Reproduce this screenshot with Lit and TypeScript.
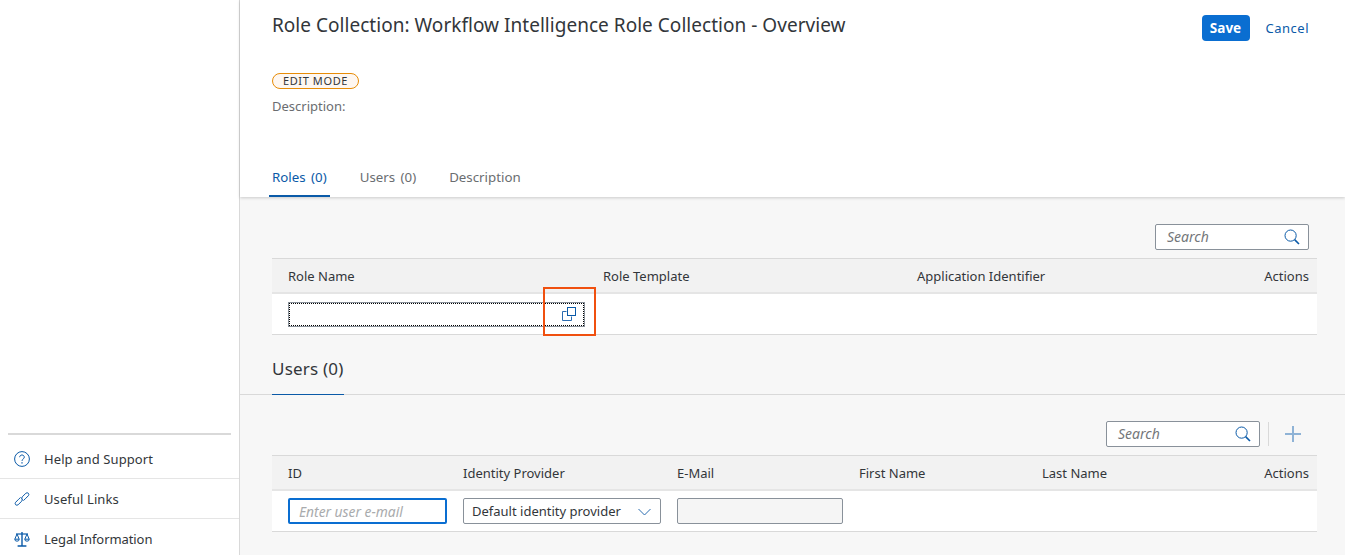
import { LitElement, css, html } from 'lit'
import { customElement } from 'lit/decorators.js'

const searchIcon = html`<svg class="search-icon" viewBox="0 0 16 16" width="16" height="16" fill="none" stroke="#0a5aa8">
  <circle cx="6.6" cy="6.6" r="5.6" stroke-width="1"></circle>
  <path d="M10.6 10.6 15 15" stroke-width="1.6"></path>
</svg>`

@customElement('app-root')
export class AppRoot extends LitElement {
  render() {
    return html`
      <aside class="sidebar">
        <div class="side-links">
          <div class="side-item">
            <svg viewBox="0 0 16 16" width="16" height="16" fill="none" stroke="#0a5aa8">
              <circle cx="8" cy="8" r="7.4"></circle>
              <path d="M5.7 6.2C5.7 4.8 6.7 4 8 4s2.3.9 2.3 2.1c0 1.9-2.3 1.9-2.3 3.8"></path>
              <path d="M8 11.2v1.4" stroke-width="1.3"></path>
            </svg>
            <span>Help and Support</span>
          </div>
          <div class="side-item">
            <svg viewBox="0 0 16 16" width="16" height="16" fill="none" stroke="#0a5aa8">
              <path d="M6.6 6.4 4.7 8.2 1.6 11.3a2 2 0 0 0 0 2.4 2 2 0 0 0 2.6 0l3.6-3.6a2 2 0 0 0 0-2.6"></path>
              <path d="M9.4 9.6l1.9-1.8 3.1-3.1a2 2 0 0 0 0-2.4 2 2 0 0 0-2.6 0L8.2 5.9a2 2 0 0 0 0 2.6"></path>
            </svg>
            <span>Useful Links</span>
          </div>
          <div class="side-item">
            <svg viewBox="0 0 16 16" width="16" height="16" fill="none" stroke="#0a5aa8">
              <path d="M8 1v13.4M3.6 15h8.8" stroke-width="1.4"></path>
              <path d="M2 3h12" stroke-width="1.2"></path>
              <path d="M3 3 .8 8.2h4.4zM13 3l-2.2 5.2h4.4z"></path>
              <path d="M.8 8.2a2.2 2 0 0 0 4.4 0M10.8 8.2a2.2 2 0 0 0 4.4 0"></path>
            </svg>
            <span>Legal Information</span>
          </div>
        </div>
      </aside>
      <main class="main">
        <header class="header">
          <div class="title-row">
            <h1>Role Collection: Workflow Intelligence Role Collection - Overview</h1>
            <div class="actions">
              <button class="save">Save</button>
              <span class="cancel">Cancel</span>
            </div>
          </div>
          <div class="badge">EDIT MODE</div>
          <div class="desc">Description:</div>
          <nav class="tabs">
            <span class="tab active">Roles (0)</span>
            <span class="tab">Users (0)</span>
            <span class="tab">Description</span>
          </nav>
        </header>

        <section class="roles">
          <div class="toolbar">
            <div class="search"><span>Search</span>${searchIcon}</div>
          </div>
          <div class="table">
            <div class="thead roles-grid">
              <span>Role Name</span><span>Role Template</span><span>Application Identifier</span><span class="right">Actions</span>
            </div>
            <div class="trow roles-grid">
              <div class="role-input">
                <svg viewBox="0 0 14 14" width="14" height="14" fill="none" stroke="#0a5aa8">
                  <path d="M4.5 4.5H.5v9h9v-4" stroke="#2b6cb0"></path>
                  <rect x="5.5" y=".5" width="8" height="8"></rect>
                </svg>
              </div>
            </div>
          </div>
        </section>

        <div class="users-head"><h2>Users (0)</h2></div>

        <section class="users">
          <div class="toolbar">
            <div class="search"><span>Search</span>${searchIcon}</div>
            <span class="sep"></span>
            <svg class="plus" viewBox="0 0 16 16" width="16" height="16" stroke="#8fb3d6" stroke-width="2">
              <path d="M8 0v16M0 8h16"></path>
            </svg>
          </div>
          <div class="table">
            <div class="thead users-grid">
              <span>ID</span><span>Identity Provider</span><span>E-Mail</span><span>First Name</span><span>Last Name</span><span class="right">Actions</span>
            </div>
            <div class="trow users-grid">
              <div class="field id-field">Enter user e-mail</div>
              <div class="field select">
                <span>Default identity provider</span>
                <svg viewBox="0 0 13 8" width="13" height="8" fill="none" stroke="#2b6cb0"><path d="M.5 1 6.5 7l6-6"></path></svg>
              </div>
              <div class="field mail"></div>
            </div>
          </div>
        </section>

        <div class="callout"></div>
      </main>
    `
  }

  static styles = css`
    :host {
      display: flex;
      height: 555px;
      overflow: hidden;
      background: #f7f7f7;
      color: #32363a;
      font-family: 'Noto Sans', Arial, sans-serif;
      font-size: 13px;
    }

    .sidebar {
      width: 239px;
      flex: none;
      background: #fff;
      border-right: 1px solid #d9d9d9;
      display: flex;
      flex-direction: column;
      justify-content: flex-end;
    }

    .side-links {
      margin-bottom: -4px;
    }

    .side-links::before {
      content: '';
      display: block;
      height: 2px;
      margin: 0 8px 4px;
      background: #d9d9d9;
    }

    .side-item {
      height: 40px;
      display: flex;
      align-items: center;
      gap: 14px;
      padding-left: 14px;
      box-sizing: border-box;
      border-bottom: 1px solid #e5e5e5;
      letter-spacing: 0.1px;
    }

    .side-item:last-child {
      border-bottom: 0;
      letter-spacing: -0.08px;
    }

    .main {
      position: relative;
      flex: 1;
      min-width: 0;
    }

    .header {
      height: 197px;
      box-sizing: border-box;
      background: #fff;
      padding: 0 28px 0 32px;
      box-shadow: 0 1px 3px rgba(0, 0, 0, 0.18);
      display: flex;
      flex-direction: column;
    }

    .title-row {
      height: 50px;
      display: flex;
      justify-content: space-between;
    }

    h1 {
      margin: 13px 0 0;
      font-size: 19px;
      line-height: 24px;
      font-weight: 400;
      letter-spacing: 0.03px;
    }

    .actions {
      display: flex;
      align-items: center;
      gap: 16px;
      height: 26px;
      margin: 15px 8px 0 0;
    }

    .save {
      width: 48px;
      height: 26px;
      padding: 0;
      border: 0;
      border-radius: 4px;
      background: #0a6ed1;
      color: #fff;
      font: 700 13.5px 'Noto Sans', Arial, sans-serif;
    }

    .cancel {
      color: #0a5aa8;
      letter-spacing: 0.5px;
    }

    .badge {
      align-self: flex-start;
      width: 87px;
      height: 16px;
      margin-top: 23px;
      box-sizing: border-box;
      border: 1px solid #e78c07;
      border-radius: 8px;
      background: #fef7f1;
      font-size: 11px;
      letter-spacing: 0.6px;
      line-height: 14px;
      text-align: center;
    }

    .desc {
      margin-top: 8px;
      line-height: 18px;
      color: #6a6d70;
    }

    .tabs {
      display: flex;
      gap: 27px;
      margin: auto 0 0 -3px;
    }

    .tab {
      height: 42px;
      box-sizing: border-box;
      padding: 13px 3px 0;
      font-size: 13.3px;
      line-height: 18px;
      color: #6a6d70;
      word-spacing: 2px;
    }

    .tab.active {
      color: #0a5aa8;
      border-bottom: 2px solid #0a5aa8;
    }

    .roles,
    .users {
      padding: 0 28px 0 32px;
    }

    .toolbar {
      display: flex;
      justify-content: flex-end;
      align-items: center;
      box-sizing: border-box;
    }

    .roles .toolbar {
      height: 61px;
      padding: 27px 8px 8px 0;
    }

    .users .toolbar {
      height: 60px;
      padding: 26px 16px 8px 0;
      gap: 8px;
    }

    .search {
      width: 154px;
      height: 26px;
      box-sizing: border-box;
      display: flex;
      align-items: center;
      justify-content: space-between;
      padding: 0 8px 0 11px;
      background: #fff;
      border: 1px solid #89919a;
      border-radius: 2px;
      font-size: 14px;
      font-style: italic;
      color: #74777a;
    }

    .search span {
      margin-bottom: 2px;
    }

    .sep {
      width: 1px;
      height: 24px;
      background: #d9d9d9;
    }

    .plus {
      margin-left: 8px;
    }

    .table {
      border-top: 1px solid #d9d9d9;
      border-bottom: 1px solid #d9d9d9;
    }

    .thead {
      height: 33px;
      align-items: center;
      background: #f2f2f2;
      border-bottom: 2px solid #e5e5e5;
      box-sizing: content-box;
    }

    .trow {
      height: 40px;
      align-items: center;
      background: #fff;
    }

    .roles-grid,
    .users-grid {
      display: grid;
      padding: 0 8px 0 16px;
    }

    .roles-grid {
      grid-template-columns: 315px 314px 1fr auto;
    }

    .users-grid {
      grid-template-columns: 175px 214px 182px 183px 1fr auto;
    }

    .right {
      text-align: right;
    }

    .role-input {
      width: 297px;
      height: 25px;
      box-sizing: border-box;
      display: flex;
      align-items: center;
      justify-content: flex-end;
      padding-right: 8px;
      background: #fff;
      border: 1px solid #89919a;
      outline: 1px dotted #000;
      outline-offset: -2px;
    }

    .field {
      height: 26px;
      box-sizing: border-box;
      display: flex;
      align-items: center;
      background: #fff;
      border: 1px solid #89919a;
      border-radius: 2px;
    }

    .id-field {
      width: 159px;
      padding-left: 9px;
      border: 2px solid #0a6ed1;
      font-size: 13.8px;
      font-style: italic;
      color: #a9abad;
    }

    .select {
      width: 198px;
      padding: 0 9px 0 8px;
      justify-content: space-between;
    }

    .select svg {
      margin-top: 2px;
    }

    .mail {
      width: 166px;
      background: #f5f5f5;
    }

    .users-head {
      height: 49px;
      margin-top: 11px;
      padding-left: 32px;
      border-bottom: 1px solid #d9d9d9;
      box-sizing: border-box;
    }

    .users-head h2 {
      display: inline-block;
      margin: 0;
      height: 49px;
      box-sizing: border-box;
      padding: 11px 0 0;
      width: 72px;
      font-size: 17px;
      line-height: 24px;
      font-weight: 400;
      letter-spacing: 0.2px;
      border-bottom: 1px solid #0a5aa8;
    }

    .callout {
      position: absolute;
      left: 303px;
      top: 287px;
      width: 53px;
      height: 49px;
      box-sizing: border-box;
      border: 2px solid #f0500f;
    }
  `
}

declare global {
  interface HTMLElementTagNameMap {
    'app-root': AppRoot
  }
}
